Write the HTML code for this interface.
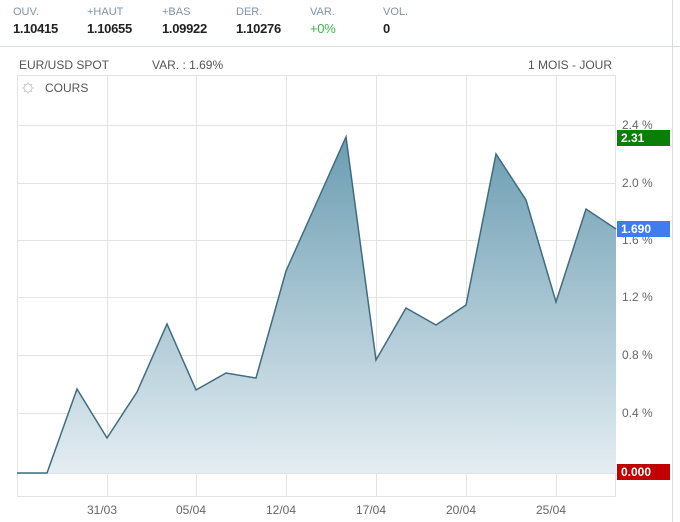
<!DOCTYPE html>
<html><head><meta charset="utf-8"><style>
body{margin:0;width:680px;height:522px;background:#fff;font-family:"Liberation Sans",sans-serif;position:relative;overflow:hidden}
.t{position:absolute;white-space:nowrap}
.h{font-size:11px;color:#7e93ab;top:6px}
.v{font-size:13px;color:#222;top:21px;font-weight:bold;letter-spacing:-0.3px}
.s{font-size:12px;color:#555;top:58px}
.y{font-size:12px;color:#666;left:622px}
.x{font-size:12px;color:#666;top:503px}
.b{position:absolute;left:617px;width:53px;height:16px;color:#fff;font-size:12px;font-weight:bold;line-height:16px;padding-left:4px;box-sizing:border-box}
</style></head><body>
<div class="t h" style="left:13px">OUV.</div><div class="t v" style="left:13px">1.10415</div>
<div class="t h" style="left:87px">+HAUT</div><div class="t v" style="left:87px">1.10655</div>
<div class="t h" style="left:162px">+BAS</div><div class="t v" style="left:162px">1.09922</div>
<div class="t h" style="left:236px">DER.</div><div class="t v" style="left:236px">1.10276</div>
<div class="t h" style="left:310px">VAR.</div><div class="t v" style="left:310px;color:#3bb54a;font-weight:normal">+0%</div>
<div class="t h" style="left:383px">VOL.</div><div class="t v" style="left:383px">0</div>
<div style="position:absolute;left:0;top:46px;width:680px;height:1px;background:#d5dbe2"></div>
<div style="position:absolute;left:672px;top:0;width:1px;height:522px;background:#d5dbe2"></div>
<div class="t s" style="left:19px">EUR/USD SPOT</div>
<div class="t s" style="left:152px">VAR. : 1.69%</div>
<div class="t s" style="left:528px">1 MOIS - JOUR</div>
<svg style="position:absolute;left:0;top:0" width="680" height="522">
<defs><linearGradient id="g" x1="0" y1="0" x2="0" y2="1"><stop offset="0" stop-color="#6b9db2"/><stop offset="1" stop-color="#e4edf2"/></linearGradient></defs>
<g stroke="#e3e3e3" stroke-width="1" fill="none">
<rect x="17.5" y="75.5" width="598" height="421"/>
<path d="M107.5 75V497M196.5 75V497M286.5 75V497M376.5 75V497M466.5 75V497M556.5 75V497"/>
<path d="M17 125.5H616M17 183.5H616M17 240.5H616M17 297.5H616M17 355.5H616M17 413.5H616M17 473.5H616"/>
</g>
<path d="M17 473L47 473L77 389L107 438L137 392L167 324L196 390L226 373L256 378L286 271L316 204L346 137L376 360L406 308L436 325L466 305L496 154L526 200L556 302L586 209L616 229L616 473Z" fill="url(#g)"/>
<path d="M17 473L47 473L77 389L107 438L137 392L167 324L196 390L226 373L256 378L286 271L316 204L346 137L376 360L406 308L436 325L466 305L496 154L526 200L556 302L586 209L616 229" fill="none" stroke="#3f6c80" stroke-width="1.5"/>
<g stroke="#c9c9c9" stroke-width="1" fill="none"><circle cx="28" cy="88" r="4"/><path d="M28 82v2M28 92v2M22 88h2M32 88h2M24 84l1.5 1.5M30.5 90.5L32 92M24 92l1.5-1.5M30.5 85.5L32 84"/></g>
</svg>
<div class="t" style="left:45px;top:81px;font-size:12px;color:#555">COURS</div>
<div class="t y" style="top:118px">2.4 %</div>
<div class="t y" style="top:176px">2.0 %</div>
<div class="t y" style="top:233px">1.6 %</div>
<div class="t y" style="top:290px">1.2 %</div>
<div class="t y" style="top:348px">0.8 %</div>
<div class="t y" style="top:406px">0.4 %</div>
<div class="b" style="top:130px;background:#0a7e07">2.31</div>
<div class="b" style="top:221px;background:#3f7cf2">1.690</div>
<div class="b" style="top:464px;background:#c30000">0.000</div>
<div class="t x" style="left:87px">31/03</div>
<div class="t x" style="left:176px">05/04</div>
<div class="t x" style="left:266px">12/04</div>
<div class="t x" style="left:356px">17/04</div>
<div class="t x" style="left:446px">20/04</div>
<div class="t x" style="left:536px">25/04</div>
</body></html>
